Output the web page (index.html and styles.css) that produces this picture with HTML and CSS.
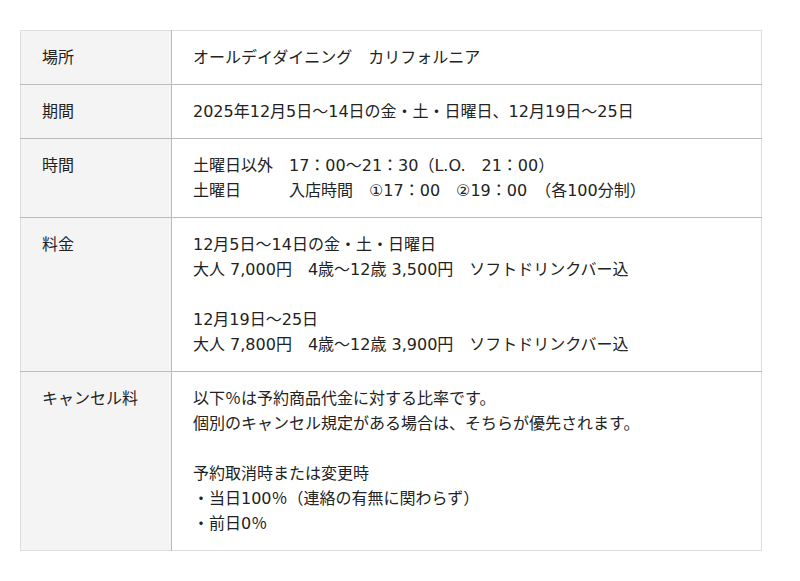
FILE: index.html
```html
<!DOCTYPE html>
<html lang="ja">
<head>
<meta charset="utf-8">
<link rel="stylesheet" href="styles.css">
</head>
<body>
<div class="wrap">
<table class="info">
  <tr>
    <th>場所</th>
    <td>オールデイダイニング　カリフォルニア</td>
  </tr>
  <tr>
    <th>期間</th>
    <td>2025年12月5日〜14日の金・土・日曜日、12月19日〜25日</td>
  </tr>
  <tr>
    <th>時間</th>
    <td>土曜日以外　17：00〜21：30（L.O.　21：00）<br>土曜日　　　入店時間　①17：00　②19：00　（各100分制）</td>
  </tr>
  <tr>
    <th>料金</th>
    <td>12月5日〜14日の金・土・日曜日<br>大人 7,000円　4歳〜12歳 3,500円　ソフトドリンクバー込<br><br>12月19日〜25日<br>大人 7,800円　4歳〜12歳 3,900円　ソフトドリンクバー込</td>
  </tr>
  <tr>
    <th>キャンセル料</th>
    <td>以下％は予約商品代金に対する比率です。<br>個別のキャンセル規定がある場合は、そちらが優先されます。<br><br>予約取消時または変更時<br>・当日100％（連絡の有無に関わらず）<br>・前日0％</td>
  </tr>
</table>
</div>
</body>
</html>
```

FILE: styles.css
```css
html, body {
  margin: 0;
  padding: 0;
  background: #fff;
}
.wrap {
  padding: 30px 20px;
}
.info {
  width: 742px;
  border-collapse: collapse;
  border: 1px solid #dddddd;
  font-family: "DejaVu Sans", "Noto Sans CJK JP", sans-serif;
  font-size: 16px;
  line-height: 25px;
  color: #222;
}
.info th,
.info td {
  text-align: left;
  vertical-align: top;
  font-weight: normal;
  padding: 14px 21px;
}
.info th {
  width: 108px;
  background: #f4f4f4;
  border-right: 1px solid #bbbbbb;
}
.info tr + tr th,
.info tr + tr td {
  border-top: 1px solid #bbbbbb;
}
```
